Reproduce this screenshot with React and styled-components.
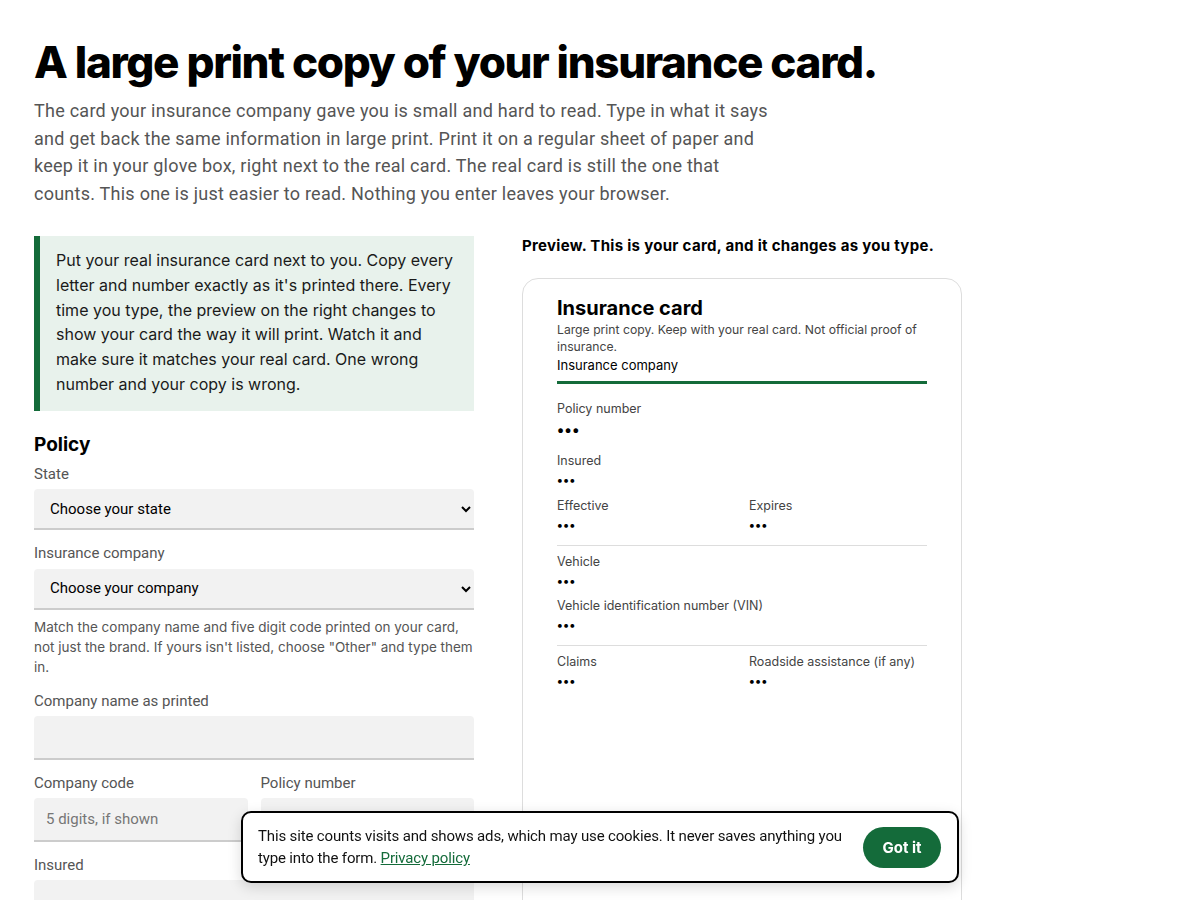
import React from "react";
import styled, { createGlobalStyle } from "styled-components";

const Global = createGlobalStyle`
  html, body { margin: 0; padding: 0; background: #fff; }
  body { font-family: Inter, "Noto Sans", sans-serif; color: #111; }
  * { box-sizing: border-box; }
`;

const Page = styled.main`
  padding: 36px 34px 120px;
  max-width: 996px;
`;

const Title = styled.h1`
  font-family: Inter, sans-serif;
  font-weight: 800;
  font-size: 44px;
  letter-spacing: -1.35px;
  line-height: 52px;
  margin: 0;
  color: #000;
`;

const Lead = styled.p`
  font-family: Roboto, sans-serif;
  font-size: 18px;
  letter-spacing: 0.25px;
  line-height: 27.5px;
  color: #555;
  margin: 9px 0 0;
  max-width: 745px;
`;

const Columns = styled.div`
  display: grid;
  grid-template-columns: 440px 440px;
  column-gap: 48px;
  margin-top: 29px;
  align-items: start;
`;

const FormCol = styled.section`
  display: flex;
  flex-direction: column;
  min-width: 0;
`;

const Callout = styled.div`
  background: #e8f2ec;
  border-left: 6px solid #146b3a;
  padding: 12px 20px 14px 16px;
  font-size: 16px;
  line-height: 24.8px;
  color: #1a1a1a;
`;

const SectionTitle = styled.h2`
  font-size: 19px;
  font-weight: 700;
  margin: 22px 0 7px;
  line-height: 24px;
  color: #000;
`;

const Field = styled.label`
  display: flex;
  flex-direction: column;
  min-width: 0;
  margin-top: ${(p) => (p.$first ? "0" : "13px")};
`;

const Label = styled.span`
  font-family: Roboto, sans-serif;
  font-size: 15px;
  color: #555;
  line-height: 20px;
  margin-bottom: 5.5px;
`;

const fieldBase = `
  width: 100%;
  background: #f2f2f2;
  border: none;
  border-bottom: 2px solid #ccc;
  border-radius: 4px 4px 0 0;
  font-family: Roboto, sans-serif;
  font-size: 15px;
  color: #000;
`;

const Select = styled.select`
  ${fieldBase}
  height: 41px;
  padding: 0 8px 0 12px;
`;

const Input = styled.input`
  ${fieldBase}
  height: 43.5px;
  padding: 0 12px;
  &::placeholder { color: #767676; }
`;

const Hint = styled.p`
  font-size: 13.5px;
  line-height: 20px;
  color: #555;
  margin: 7px 0 1px;
`;

const Pair = styled.div`
  display: grid;
  grid-template-columns: minmax(0, 1fr) minmax(0, 1fr);
  column-gap: 13px;
`;

const PreviewCol = styled.section`
  display: flex;
  flex-direction: column;
`;

const PreviewTitle = styled.h3`
  font-size: 15px;
  font-weight: 700;
  letter-spacing: 0.3px;
  margin: 0 0 22px;
  line-height: 20px;
  color: #000;
`;

const Card = styled.div`
  border: 1px solid #ddd;
  border-radius: 16px;
  padding: 16px 34px 40px;
  min-height: 640px;
`;

const CardTitle = styled.div`
  font-size: 20px;
  font-weight: 700;
  color: #000;
  line-height: 26px;
`;

const CardNote = styled.div`
  font-size: 12.2px;
  color: #444;
  line-height: 17px;
`;

const Company = styled.div`
  font-size: 13px;
  color: #000;
  line-height: 18px;
  margin-top: 1px;
  padding-bottom: 7px;
  border-bottom: 3px solid #146b3a;
`;

const Row = styled.div`
  display: grid;
  grid-template-columns: ${(p) => (p.$two ? "1fr 1fr" : "1fr")};
  column-gap: 14px;
  margin-top: ${(p) => p.$mt || 0}px;
  padding-bottom: ${(p) => (p.$divider ? 10 : 0)}px;
  border-bottom: ${(p) => (p.$divider ? "1px solid #ddd" : "none")};
`;

const Item = styled.div`
  display: flex;
  flex-direction: column;
`;

const ItemLabel = styled.div`
  font-size: 12.5px;
  color: #444;
  line-height: 18px;
`;

const ItemValue = styled.div`
  font-size: ${(p) => (p.$big ? 15 : 12)}px;
  font-weight: 700;
  color: #000;
  line-height: ${(p) => (p.$big ? 24 : 20)}px;
  letter-spacing: 0.5px;
`;

const Banner = styled.div`
  position: fixed;
  left: 50%;
  bottom: 17px;
  transform: translateX(-50%);
  width: 718px;
  background: #fff;
  border: 2px solid #000;
  border-radius: 10px;
  box-shadow: 0 4px 14px rgba(0, 0, 0, 0.15);
  display: flex;
  align-items: center;
  gap: 16px;
  padding: 12px 16px 12px 15px;
`;

const BannerText = styled.p`
  margin: 0;
  flex: 1;
  font-family: Roboto, sans-serif;
  font-size: 15px;
  letter-spacing: -0.15px;
  line-height: 22px;
  color: #111;
  a { color: #146b3a; text-decoration: underline; }
`;

const GotIt = styled.button`
  flex: none;
  background: #146b3a;
  color: #fff;
  border: none;
  border-radius: 21px;
  height: 41px;
  width: 78px;
  padding: 0;
  font-family: Inter, sans-serif;
  font-weight: 700;
  font-size: 15px;
`;

function Value({ big }) {
  return <ItemValue $big={big}>•••</ItemValue>;
}

export default function App() {
  return (
    <>
      <Global />
      <Page>
        <Title>A large print copy of your insurance card.</Title>
        <Lead>
          The card your insurance company gave you is small and hard to read. Type in what it says and get back the
          same information in large print. Print it on a regular sheet of paper and keep it in your glove box, right
          next to the real card. The real card is still the one that counts. This one is just easier to read. Nothing
          you enter leaves your browser.
        </Lead>
        <Columns>
          <FormCol>
            <Callout>
              Put your real insurance card next to you. Copy every letter and number exactly as it's printed there.
              Every time you type, the preview on the right changes to show your card the way it will print. Watch it
              and make sure it matches your real card. One wrong number and your copy is wrong.
            </Callout>
            <SectionTitle>Policy</SectionTitle>
            <Field $first>
              <Label>State</Label>
              <Select defaultValue="">
                <option value="">Choose your state</option>
              </Select>
            </Field>
            <Field>
              <Label>Insurance company</Label>
              <Select defaultValue="">
                <option value="">Choose your company</option>
              </Select>
            </Field>
            <Hint>
              Match the company name and five digit code printed on your card, not just the brand. If yours isn't
              listed, choose "Other" and type them in.
            </Hint>
            <Field>
              <Label>Company name as printed</Label>
              <Input />
            </Field>
            <Pair>
              <Field>
                <Label>Company code</Label>
                <Input placeholder="5 digits, if shown" />
              </Field>
              <Field>
                <Label>Policy number</Label>
                <Input />
              </Field>
            </Pair>
            <Field>
              <Label>Insured</Label>
              <Input />
            </Field>
          </FormCol>
          <PreviewCol>
            <PreviewTitle>Preview. This is your card, and it changes as you type.</PreviewTitle>
            <Card>
              <CardTitle>Insurance card</CardTitle>
              <CardNote>Large print copy. Keep with your real card. Not official proof of insurance.</CardNote>
              <Company>Insurance company</Company>
              <Row $mt={16}>
                <Item>
                  <ItemLabel>Policy number</ItemLabel>
                  <Value big />
                </Item>
              </Row>
              <Row $mt={10}>
                <Item>
                  <ItemLabel>Insured</ItemLabel>
                  <Value />
                </Item>
              </Row>
              <Row $two $mt={7} $divider>
                <Item>
                  <ItemLabel>Effective</ItemLabel>
                  <Value />
                </Item>
                <Item>
                  <ItemLabel>Expires</ItemLabel>
                  <Value />
                </Item>
              </Row>
              <Row $mt={7}>
                <Item>
                  <ItemLabel>Vehicle</ItemLabel>
                  <Value />
                </Item>
              </Row>
              <Row $mt={6} $divider>
                <Item>
                  <ItemLabel>Vehicle identification number (VIN)</ItemLabel>
                  <Value />
                </Item>
              </Row>
              <Row $two $mt={7}>
                <Item>
                  <ItemLabel>Claims</ItemLabel>
                  <Value />
                </Item>
                <Item>
                  <ItemLabel>Roadside assistance (if any)</ItemLabel>
                  <Value />
                </Item>
              </Row>
            </Card>
          </PreviewCol>
        </Columns>
      </Page>
      <Banner>
        <BannerText>
          This site counts visits and shows ads, which may use cookies. It never saves anything you type into the
          form. <a href="#privacy">Privacy policy</a>
        </BannerText>
        <GotIt>Got it</GotIt>
      </Banner>
    </>
  );
}
